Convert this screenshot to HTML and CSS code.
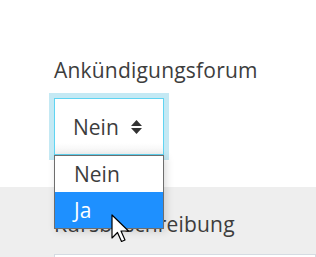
FILE: index.html
```html
<!DOCTYPE html>
<html>
<head>
  <meta charset="UTF-8">
  <title>Kurseinstellungen</title>
  <link rel="stylesheet" href="styles.css">
</head>
<body>
  <div class="field">
    <label class="label">Ankündigungsforum</label>
    <div class="select-wrap">
      <div class="select">
        <span>Nein</span>
        <svg class="arrows" width="11" height="14" viewBox="0 0 11 14">
          <path d="M5.5 0 L11 6 L0 6 Z" fill="#333"/>
          <path d="M0 8 L11 8 L5.5 14 Z" fill="#333"/>
        </svg>
      </div>
      <ul class="options">
        <li>Nein</li>
        <li class="active">Ja</li>
      </ul>
      <svg class="cursor" width="20" height="30" viewBox="0 0 20 30">
        <path d="M1 1 L1 24 L6.5 18.5 L10.5 27.5 L14 26 L10 17 L17.5 17 Z" fill="#fff" stroke="#000" stroke-width="1.2" stroke-linejoin="round"/>
      </svg>
    </div>
  </div>

  <div class="section">
    <h3 class="section-title">Kursbeschreibung</h3>
    <div class="textbox"></div>
  </div>
</body>
</html>
```

FILE: styles.css
```css
body {
  margin: 0;
  font-family: "Open Sans", sans-serif;
  color: #3d3d3d;
  background: #fff;
  overflow: hidden;
}
.field {
  padding: 55px 0 0 54px;
  height: 132px;
}
.label {
  display: block;
  font-size: 21px;
  letter-spacing: 0.2px;
  line-height: 30px;
}
.select-wrap {
  position: relative;
  margin-top: 13px;
  width: 110px;
}
.select {
  box-sizing: border-box;
  height: 57px;
  border: 1px solid #5fd4f2;
  box-shadow: 0 0 0 5px #c4e9f4;
  background: linear-gradient(#fff 80%, #f2f2f2);
  display: flex;
  align-items: center;
  padding-left: 18px;
  font-size: 21px;
}
.arrows {
  margin-left: 12px;
}
.options {
  position: absolute;
  top: 57px;
  left: 0;
  width: 110px;
  box-sizing: border-box;
  margin: 0;
  padding: 0;
  list-style: none;
  border: 1px solid #6e6e6e;
  background: #fff;
  box-shadow: 2px 2px 8px rgba(0, 0, 0, 0.15);
  z-index: 2;
}
.options li {
  height: 36px;
  line-height: 36px;
  padding-left: 19px;
  font-size: 21px;
}
.options li.active {
  background: #1e90ff;
  color: #fff;
}
.cursor {
  position: absolute;
  top: 116px;
  left: 57px;
  z-index: 3;
}
.section {
  background: #eee;
  padding: 22px 0 0 54px;
  height: 100px;
}
.section-title {
  margin: 0;
  font-weight: normal;
  font-size: 21px;
  letter-spacing: 0.2px;
  line-height: 30px;
}
.textbox {
  margin-top: 15px;
  height: 40px;
  background: #fff;
  border: 1px solid #d5dbe2;
}
```
